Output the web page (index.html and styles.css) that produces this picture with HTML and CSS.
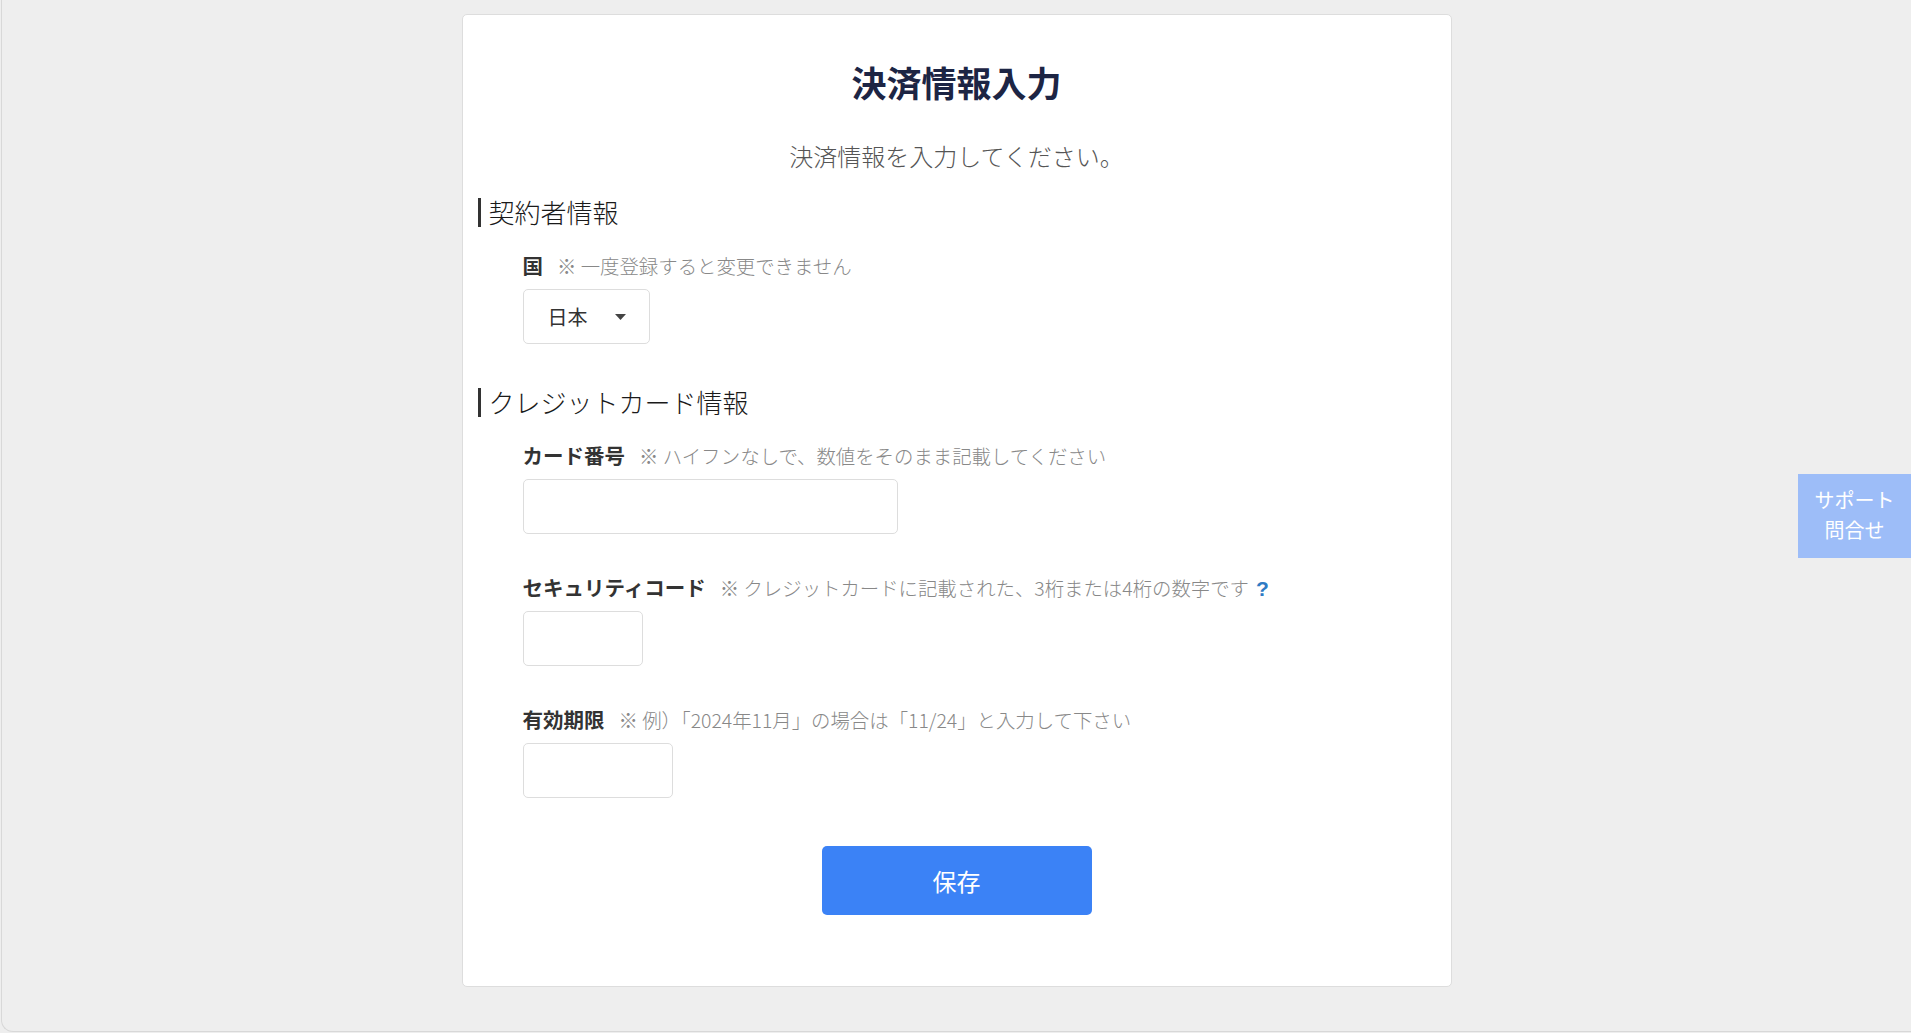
FILE: index.html
```html
<!DOCTYPE html>
<html lang="ja">
<head>
<meta charset="utf-8">
<title>決済情報入力</title>
<link rel="stylesheet" href="styles.css">
</head>
<body>
<div class="frame">
  <main class="card">
    <h1 class="title">決済情報入力</h1>
    <p class="lead">決済情報を入力してください。</p>

    <section class="section section-contract">
      <h2 class="section-heading">契約者情報</h2>
      <div class="section-body">
        <div class="field">
          <div class="field-label"><span class="label">国</span><span class="note">※ 一度登録すると変更できません</span></div>
          <div class="select">
            <span class="select-value">日本</span>
            <svg class="select-caret" width="11" height="6" viewBox="0 0 11 6"><path d="M0 0h11L5.5 6z" fill="#444"/></svg>
          </div>
        </div>
      </div>
    </section>

    <section class="section">
      <h2 class="section-heading">クレジットカード情報</h2>
      <div class="section-body">
        <div class="field">
          <div class="field-label"><span class="label">カード番号</span><span class="note">※ ハイフンなしで、数値をそのまま記載してください</span></div>
          <input class="input input-card" type="text">
        </div>
        <div class="field">
          <div class="field-label"><span class="label">セキュリティコード</span><span class="note">※ クレジットカードに記載された、3桁または4桁の数字です</span><span class="help">?</span></div>
          <input class="input input-cvc" type="text">
        </div>
        <div class="field field-last">
          <div class="field-label"><span class="label">有効期限</span><span class="note">※ 例）「2024年11月」の場合は「11/24」と入力して下さい</span></div>
          <input class="input input-exp" type="text">
        </div>
      </div>
    </section>

    <div class="actions">
      <button class="save" type="button">保存</button>
    </div>
  </main>
</div>
<div class="support">サポート<br>問合せ</div>
</body>
</html>
```

FILE: styles.css
```css
* { box-sizing: border-box; }

html, body {
  margin: 0;
  padding: 0;
  background: #eeeeee;
  font-family: "Noto Sans CJK JP", "Noto Sans", sans-serif;
  color: #333;
}

.frame {
  margin-left: 1px;
  height: 1032px;
  padding-top: 14px;
  border-left: 1px solid #d8d8d8;
  border-bottom: 1px solid #d8d8d8;
  border-bottom-left-radius: 12px;
}

.card {
  width: 990px;
  margin: 0 auto;
  background: #fff;
  border: 1px solid #dddddd;
  border-radius: 5px;
  padding: 41px 15px 71px;
}

.title {
  margin: 0;
  text-align: center;
  font-size: 35px;
  line-height: 52px;
  font-weight: 700;
  color: #1d2544;
}

.lead {
  margin: 30px 0 0;
  text-align: center;
  font-size: 24px;
  line-height: 36px;
  font-weight: 300;
  color: #555;
}

.section-contract { margin-top: 24px; }
.section + .section { margin-top: 44px; }

.section-heading {
  margin: 0;
  border-left: 3px solid #333;
  padding-left: 8px;
  font-size: 26px;
  line-height: 28px;
  padding-bottom: 1px;
  font-weight: 300;
  color: #1a1a1a;
}

.section-body {
  padding-left: 45px;
  padding-top: 23px;
}

.field { margin-bottom: 38px; }
.field:last-child { margin-bottom: 0; }

.field-label {
  display: flex;
  align-items: baseline;
  height: 30px;
  line-height: 30px;
  margin-bottom: 9px;
}

.label {
  font-size: 20.5px;
  font-weight: 700;
  color: #333;
}

.note {
  margin-left: 14px;
  font-size: 19.4px;
  font-weight: 300;
  color: #888;
}

.help {
  margin-left: 7px;
  font-family: "Liberation Sans", Arial, sans-serif;
  font-weight: 700;
  font-size: 21px;
  color: #2f7bc4;
}

.select {
  display: flex;
  align-items: center;
  width: 127px;
  height: 55px;
  padding: 0 23px 0 24px;
  border: 1px solid #dddddd;
  border-radius: 5px;
  justify-content: space-between;
}

.select-value {
  font-size: 20px;
  color: #333;
}

.input {
  display: block;
  height: 55px;
  border: 1px solid #dddddd;
  border-radius: 5px;
  background: #fff;
  padding: 0 12px;
  font: inherit;
}

.input-card { width: 375px; }
.input-cvc { width: 120px; }
.input-exp { width: 150px; }

.actions {
  display: flex;
  justify-content: center;
  margin-top: 48px;
}

.save {
  width: 270px;
  height: 69px;
  border: none;
  border-radius: 5px;
  background: #3b82f6;
  color: #fff;
  font-family: "Noto Sans CJK JP", sans-serif;
  font-size: 24px;
}

.support {
  position: fixed;
  right: 0;
  top: 474px;
  width: 113px;
  height: 84px;
  background: #9dbdf8;
  color: #fff;
  font-size: 20px;
  line-height: 30px;
  text-align: center;
  padding-top: 11px;
}
```
